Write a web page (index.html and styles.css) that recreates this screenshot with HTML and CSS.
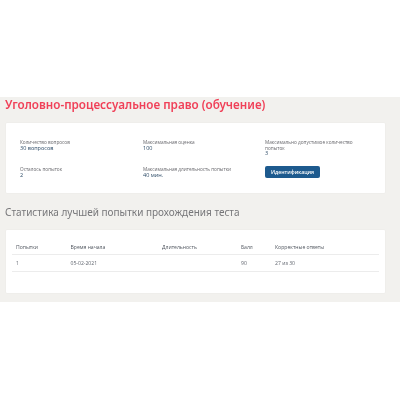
FILE: index.html
```html
<!DOCTYPE html>
<html lang="ru">
<head>
<meta charset="utf-8">
<title>Тест</title>
<link rel="stylesheet" href="styles.css">
</head>
<body>
<main class="band">
  <h1 class="title">Уголовно-процессуальное право (обучение)</h1>
  <section class="card info">
    <div class="field"><div class="label">Количество вопросов</div><div class="value">30 вопросов</div></div>
    <div class="field"><div class="label">Максимальная оценка</div><div class="value">100</div></div>
    <div class="field"><div class="label">Максимально допустимое количество попыток</div><div class="value">3</div></div>
    <div class="field"><div class="label">Осталось попыток</div><div class="value">2</div></div>
    <div class="field"><div class="label">Максимальная длительность попытки</div><div class="value">40 мин.</div></div>
    <div class="field"><button class="btn">Идентификация</button></div>
  </section>
  <h2 class="subtitle">Статистика лучшей попытки прохождения теста</h2>
  <section class="card stats">
    <div class="row head"><span>Попытки</span><span>Время начала</span><span>Длительность</span><span>Балл</span><span>Корректные ответы</span></div>
    <div class="row"><span>1</span><span>05-02-2021</span><span></span><span>90</span><span>27 из 30</span></div>
  </section>
</main>
</body>
</html>
```
FILE: styles.css
```css
html, body { margin: 0; padding: 0; background: #fff; }
body { padding-top: 97px; font-family: "Open Sans", "Liberation Sans", sans-serif; color: #3c4650; }
.band { background: #f2f1ee; height: 205px; padding: 0 15px 0 6px; box-sizing: border-box; overflow: hidden; filter: blur(.3px); }
.title { margin: 0 0 0 -1px; height: 26px; box-sizing: border-box; font-family: "Noto Sans", sans-serif; font-size: 11.7px; line-height: 15px; font-weight: 600; color: #f04058; white-space: nowrap; }
.card { background: #fff; border-radius: 1px; box-shadow: 0 0 2px rgba(0,0,0,.05); }
.info { height: 70px; padding: 17px 14px 0; box-sizing: border-box; display: grid; grid-template-columns: 123px 122px 1fr; grid-template-rows: 27px 27px; }
.label { font-size: 4.7px; line-height: 5.6px; color: #66666b; }
.value { font-size: 5.5px; line-height: 5.6px; color: #2c4a66; }
.btn { display: block; margin-top: -1px; width: 55px; height: 12px; padding: 0; border: 0; border-radius: 2px; background: #1d5a8e; color: #fff; font: 600 5.2px "Open Sans", sans-serif; }
.subtitle { margin: 0 0 0 -1px; height: 37px; padding-top: 12px; box-sizing: border-box; font-family: "Noto Sans", sans-serif; font-size: 10px; line-height: 15px; font-weight: 400; color: #77777a; white-space: nowrap; }
.stats { height: 63px; padding: 10px 6px 0; box-sizing: border-box; }
.row { display: grid; grid-template-columns: 54.5px 91.5px 79px 34px 1fr; padding-left: 4px; height: 16.5px; align-items: center; border-bottom: 1px solid #ececec; font-size: 5.1px; color: #60656e; box-sizing: border-box; }
.row.head { height: 15px; color: #50565f; }
```
